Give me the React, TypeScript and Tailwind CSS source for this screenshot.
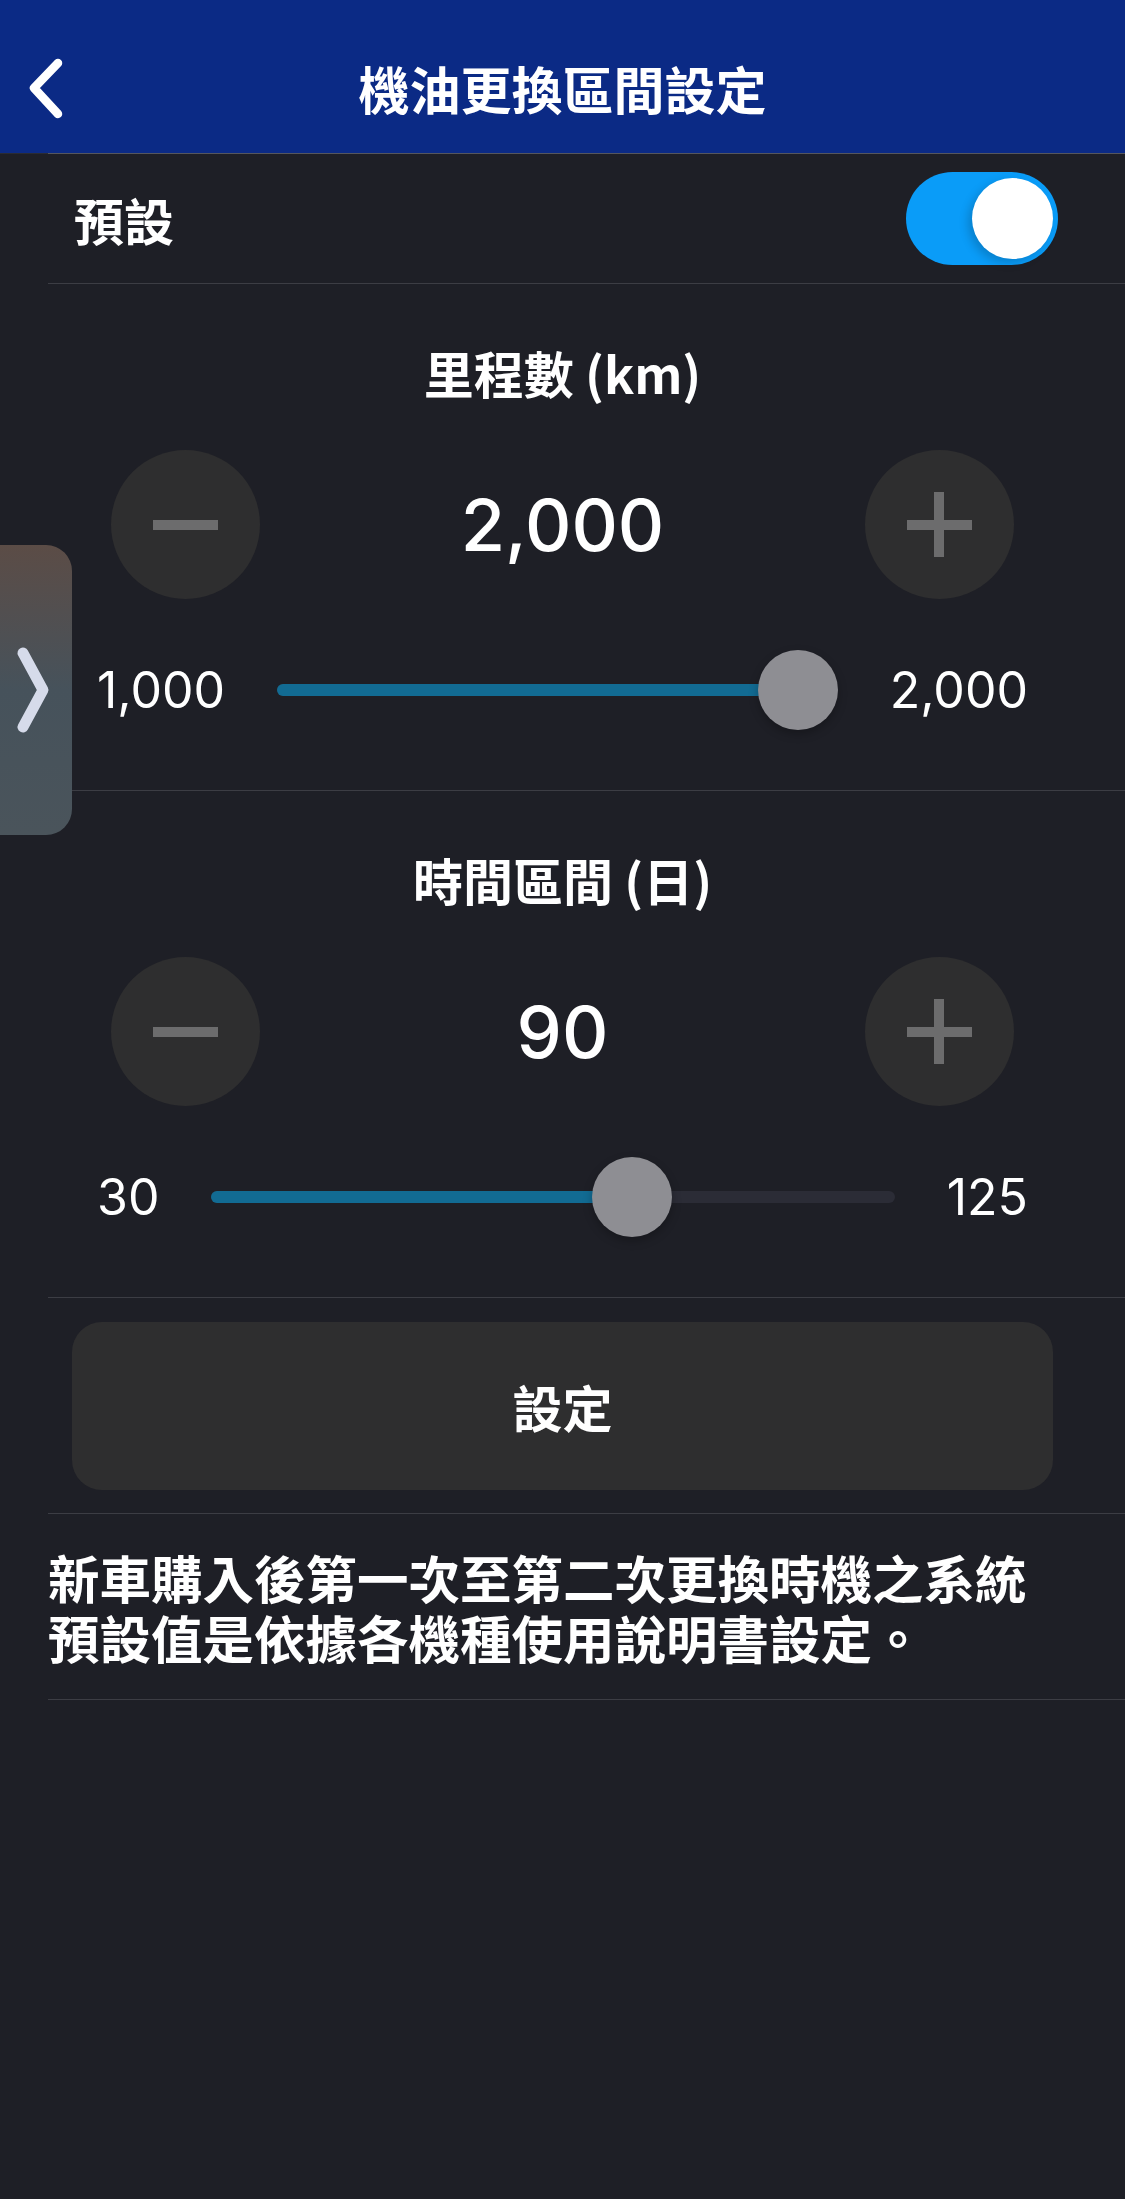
import React from "react";

const cjk = { fontFamily: '"Noto Sans CJK TC", "Noto Sans", sans-serif' };
const num = { fontFamily: 'Inter, "Liberation Sans", sans-serif' };

function Divider() {
  return <div className="ml-[48px] h-px bg-[#3c3d44]" />;
}

function RoundBtn({ plus }: { plus?: boolean }) {
  return (
    <div className="relative flex h-[149px] w-[149px] items-center justify-center rounded-full bg-[#2e2e2f]">
      <div className="h-[10px] w-[65px] bg-[#6c6c6d]" />
      {plus && <div className="absolute h-[65px] w-[10px] bg-[#6c6c6d]" />}
    </div>
  );
}

function Slider({ min, max, value }: { min: number; max: number; value: number }) {
  const frac = (value - min) / (max - min);
  return (
    <div className="relative h-[80px] flex-1">
      <div className="absolute left-0 right-0 top-[34px] h-[12px] rounded-full bg-[#2b2c36]" />
      <div
        className="absolute left-0 top-[34px] h-[12px] rounded-l-full bg-[#126b93]"
        style={{ width: `calc(40px + (100% - 80px) * ${frac})` }}
      />
      <div
        className="absolute top-0 h-[80px] w-[80px] rounded-full bg-[#8e8e93] shadow-[0_4px_10px_rgba(0,0,0,0.25)]"
        style={{ left: `calc((100% - 80px) * ${frac})` }}
      />
    </div>
  );
}

function Section({
  title,
  value,
  min,
  max,
  val,
  minLabel,
  maxLabel,
}: {
  title: string;
  value: string;
  min: number;
  max: number;
  val: number;
  minLabel: string;
  maxLabel: string;
}) {
  return (
    <div className="flex flex-col pb-[60px] pt-[58px]">
      <div className="h-[60px] text-center text-[50px] font-bold leading-[60px] text-white" style={cjk}>
        {title}
      </div>
      <div className="mt-[48px] flex items-center justify-between px-[111px]">
        <RoundBtn />
        <div className="text-[72px] font-medium leading-none text-white" style={num}>
          {value}
        </div>
        <RoundBtn plus />
      </div>
      <div className="mt-[51px] flex items-center gap-[52px] px-[97px]">
        <div className="text-[50px] leading-none text-white" style={num}>
          {minLabel}
        </div>
        <Slider min={min} max={max} value={val} />
        <div className="text-[50px] leading-none text-white" style={num}>
          {maxLabel}
        </div>
      </div>
    </div>
  );
}

export default function App() {
  return (
    <div className="relative min-h-[2199px] w-full overflow-hidden bg-[#1e1f26]">
      {/* header */}
      <div className="relative flex h-[153px] items-center justify-center bg-[#0b2a85] pt-[24px]">
        <svg className="absolute left-[24px] top-[56px]" width="44" height="66" viewBox="0 0 44 66">
          <polyline
            points="34,7 10,32 34,58"
            fill="none"
            stroke="white"
            strokeWidth="8.5"
            strokeLinecap="round"
            strokeLinejoin="round"
          />
        </svg>
        <div className="text-[51px] font-bold leading-none text-white" style={cjk}>
          機油更換區間設定
        </div>
      </div>
      <div className="flex h-px">
        <div className="w-[48px] bg-[#2a2b33]" />
        <div className="flex-1 bg-[#55565d]" />
      </div>

      {/* toggle row */}
      <div className="flex h-[129px] items-center justify-between pl-[74px] pr-[67px]">
        <div className="text-[50px] font-bold leading-none text-white" style={cjk}>
          預設
        </div>
        <div className="relative h-[93px] w-[152px] rounded-full bg-[#0a9cf8]">
          <div className="absolute right-[5px] top-[6px] h-[81px] w-[81px] rounded-full bg-white shadow-[-4px_4px_10px_rgba(0,0,0,0.18)]" />
        </div>
      </div>
      <Divider />

      <Section title="里程數 (km)" value="2,000" min={1000} max={2000} val={2000} minLabel="1,000" maxLabel="2,000" />
      <Divider />
      <Section title="時間區間 (日)" value="90" min={30} max={125} val={90} minLabel="30" maxLabel="125" />
      <Divider />

      <div className="px-[72px] pb-[23px] pt-[24px]">
        <div className="flex h-[168px] items-center justify-center rounded-[30px] bg-[#2e2e2f]">
          <div className="text-[50px] font-bold leading-none text-white" style={cjk}>
            設定
          </div>
        </div>
      </div>
      <Divider />

      <div className="pb-[32px] pl-[48px] pr-[75px] pt-[33px]">
        <p className="text-[51.5px] font-bold leading-[60px] text-white" style={cjk}>
          新車購入後第一次至第二次更換時機之系統預設值是依據各機種使用說明書設定。
        </p>
      </div>
      <Divider />

      {/* side tab overlay */}
      <div className="absolute left-0 top-[545px] flex h-[290px] w-[72px] items-center justify-center rounded-r-[26px] bg-gradient-to-b from-[#5b4c46] via-[#46525b] to-[#4a545b]">
        <svg width="44" height="90" viewBox="0 0 44 90" className="-ml-[4px]">
          <polyline
            points="11,8 31,45 11,82"
            fill="none"
            stroke="#d6dbea"
            strokeWidth="11"
            strokeLinecap="round"
            strokeLinejoin="round"
          />
        </svg>
      </div>
    </div>
  );
}
